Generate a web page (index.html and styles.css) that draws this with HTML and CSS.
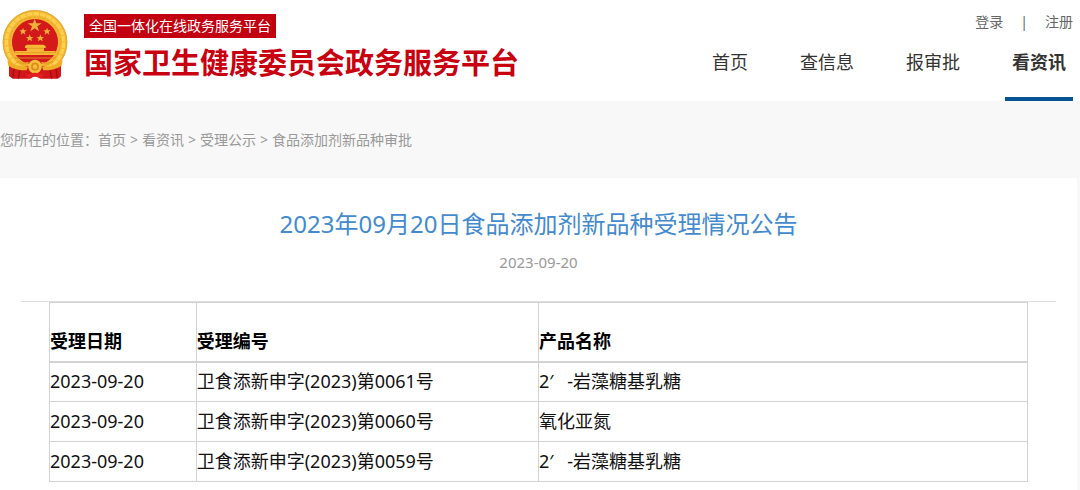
FILE: index.html
```
<!DOCTYPE html>
<html lang="zh-CN">
<head>
  <meta charset="UTF-8">
  <meta name="viewport" content="width=device-width, initial-scale=1.0">
  <title>国家卫生健康委员会政务服务平台</title>
  <link rel="stylesheet" href="styles.css">
</head>
<body>

  <header class="header">
    <div class="brand">
      <svg class="emblem" viewBox="6 27 198 213" aria-hidden="true">
        <!-- wheat ring -->
        <circle cx="105" cy="127" r="82" fill="#d51a1a" stroke="#f2b632" stroke-width="29"/>
        <circle cx="105" cy="127" r="96" fill="none" stroke="#dc9a25" stroke-width="2"/>
        <circle cx="105" cy="127" r="86" fill="none" stroke="#ffd04e" stroke-width="10" stroke-dasharray="17 3"/>
        <circle cx="105" cy="127" r="76" fill="none" stroke="#e79c22" stroke-width="2" stroke-dasharray="9 5"/>
        <circle cx="105" cy="126" r="69" fill="#d4191b"/>
        <!-- ribbon -->
        <path d="M27 190 L49 207 L86 198 H124 L161 207 L183 190 V229 L174 236 L122 236 L105 228 L90 236 L38 236 L27 228 Z" fill="#d3161a"/>
        <path d="M42 206 L38 234 M60 210 L55 236 M150 210 L155 236 M168 206 L172 234" stroke="#9d1012" stroke-width="4" fill="none"/>
        <!-- stars -->
        <g fill="#f0ae3a">
          <path d="M104 56 L109 70 L125 70 L112 79 L117 94 L104 85 L91 94 L96 79 L83 70 L99 70 Z"/>
          <path id="star" d="M69 83 L72 91 L80 91 L74 96 L76 104 L69 99 L62 104 L64 96 L58 91 L66 91 Z"/>
          <use href="#star" x="72"/>
          <use href="#star" x="20" y="20"/>
          <use href="#star" x="52" y="20"/>
        </g>
        <!-- gate -->
        <path d="M75 138 L81 134 H130 L137 138 V144 H132 V153 H167 V165 H44 V153 H80 V144 H75 Z" fill="#f5b936"/>
        <path d="M80 145 H132 M45 158 H166" stroke="#dd8d22" stroke-width="2"/>
        <path d="M45 174 H166" stroke="#e08a24" stroke-width="3"/>
        <!-- gear and knot -->
        <path d="M22 180 Q50 202 84 200 L80 211 Q45 211 25 197 Z M188 180 Q160 202 126 200 L130 211 Q165 211 185 197 Z" fill="#f0ad27"/>
        <circle cx="105" cy="200" r="16" fill="#d9861c" stroke="#f5bd3b" stroke-width="9"/>
        <circle cx="105" cy="200" r="7" fill="#f5bd3b"/>
        <path d="M51 184 Q70 194 86 188 M159 184 Q140 194 124 188" stroke="#e9a128" stroke-width="6" fill="none"/>
        <path d="M78 224 Q105 212 132 224 L126 234 Q105 226 84 234 Z" fill="#e21f20"/>
      </svg>
      <div class="brand-text">
        <span class="brand-tag">全国一体化在线政务服务平台</span>
        <span class="brand-name">国家卫生健康委员会政务服务平台</span>
      </div>
    </div>

    <div class="header-right">
      <div class="account">
        <a href="#">登录</a>
        <span>|</span>
        <a href="#">注册</a>
      </div>
      <nav class="nav">
        <a href="#">首页</a>
        <a href="#">查信息</a>
        <a href="#">报审批</a>
        <a href="#" class="active">看资讯</a>
      </nav>
    </div>
  </header>

  <div class="breadcrumb">
    <span>您所在的位置：</span>
    <a href="#">首页</a>
    <span class="sep">&gt;</span>
    <a href="#">看资讯</a>
    <span class="sep">&gt;</span>
    <a href="#">受理公示</a>
    <span class="sep">&gt;</span>
    <a href="#">食品添加剂新品种审批</a>
  </div>

  <main class="content">
    <h1 class="title">2023年09月20日食品添加剂新品种受理情况公告</h1>
    <p class="date">2023-09-20</p>
    <hr class="line">

    <table class="notice-table">
      <thead>
        <tr>
          <th class="col-date">受理日期</th>
          <th class="col-code">受理编号</th>
          <th>产品名称</th>
        </tr>
      </thead>
      <tbody>
        <tr>
          <td>2023-09-20</td>
          <td>卫食添新申字(2023)第0061号</td>
          <td>2<span class="prime">′</span>-岩藻糖基乳糖</td>
        </tr>
        <tr>
          <td>2023-09-20</td>
          <td>卫食添新申字(2023)第0060号</td>
          <td>氧化亚氮</td>
        </tr>
        <tr>
          <td>2023-09-20</td>
          <td>卫食添新申字(2023)第0059号</td>
          <td>2<span class="prime">′</span>-岩藻糖基乳糖</td>
        </tr>
      </tbody>
    </table>
  </main>

</body>
</html>
```
FILE: styles.css
```
* {
  margin: 0;
  padding: 0;
  box-sizing: border-box;
}

body {
  font-family: "Noto Sans", "Noto Sans CJK SC", sans-serif;
  background-color: #f8f8f8;
  color: #111;
}

a {
  color: inherit;
  text-decoration: none;
}

.header {
  display: flex;
  justify-content: space-between;
  background-color: #fff;
}

.brand {
  display: flex;
  align-items: flex-start;
  gap: 16px;
  padding: 9px 0 0 2px;
}

.emblem {
  width: 66px;
  height: 71px;
}

.brand-text {
  display: flex;
  flex-direction: column;
  align-items: flex-start;
  padding-top: 5px;
  white-space: nowrap;
}

.brand-tag {
  padding: 0 5px;
  font-size: 14px;
  line-height: 24px;
  color: #fff;
  background-color: #c30010;
}

.brand-name {
  font-size: 29px;
  font-weight: bold;
  line-height: 50px;
  color: #c8000f;
}

.header-right {
  display: flex;
  flex-direction: column;
  align-items: flex-end;
  padding: 12px 7px 0 0;
  white-space: nowrap;
}

.account {
  display: flex;
  gap: 17px;
  font-size: 14px;
  line-height: 20px;
  color: #666;
}

.nav {
  display: flex;
  gap: 38px;
  font-size: 18px;
  color: #333;
}

.nav a {
  padding: 16px 7px 20px;
  line-height: 29px;
  border-bottom: 4px solid transparent;
}

.nav .active {
  font-weight: bold;
  border-bottom-color: #075293;
}

.breadcrumb {
  display: flex;
  padding: 28px 0;
  font-size: 14px;
  line-height: 21px;
  color: #999;
}

.sep {
  padding: 0 4px;
}

.content {
  margin-right: 3px;
  padding: 26px 21px 9px;
  background-color: #fff;
}

.title {
  font-size: 24px;
  font-weight: normal;
  line-height: 40px;
  text-align: center;
  color: #448acf;
}

.date {
  padding: 8px 0 28px;
  font-size: 15px;
  line-height: 21px;
  text-align: center;
  color: #999;
}

.line {
  border: none;
  border-top: 1px solid #ddd;
}

.notice-table {
  width: calc(100% - 56px);
  margin: 0 28px;
  border-collapse: collapse;
  table-layout: fixed;
  font-size: 18px;
  line-height: 27px;
}

.notice-table th,
.notice-table td {
  height: 40px;
  border: 1px solid #d3d3d3;
  text-align: left;
}

.notice-table th {
  height: 59px;
  padding-top: 19px;
  border-bottom: 2px solid #d3d3d3;
  color: #000;
}

.col-date {
  width: 15%;
}

.col-code {
  width: 35%;
}

/* the prime takes a full character cell */
.prime {
  display: inline-block;
  width: 18px;
}
```
